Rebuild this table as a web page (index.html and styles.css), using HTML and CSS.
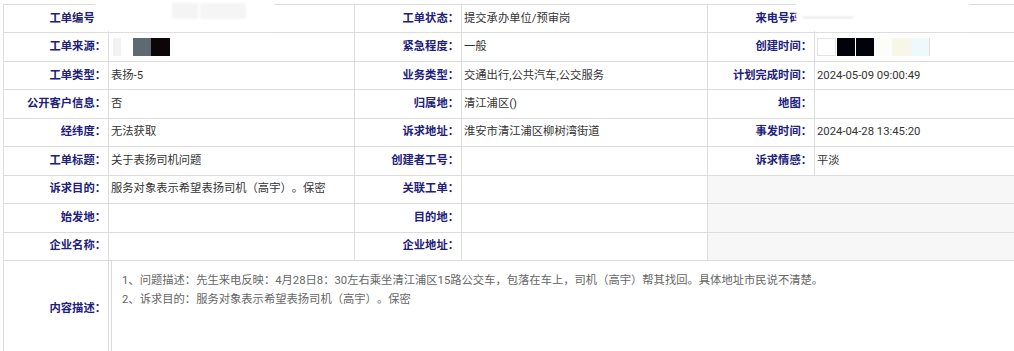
FILE: index.html
```html
<!DOCTYPE html>
<html lang="zh-CN">
<head>
<meta charset="utf-8">
<title>工单详情</title>
<link rel="stylesheet" href="styles.css">
</head>
<body>
<div class="page">
  <table class="info">
    <colgroup>
      <col class="c-lab1"><col class="c-val"><col class="c-lab"><col class="c-val"><col class="c-lab"><col class="c-last">
    </colgroup>
    <tr>
      <th>工单编号：</th><td></td>
      <th>工单状态：</th><td>提交承办单位/预审岗</td>
      <th>来电号码：</th><td></td>
    </tr>
    <tr>
      <th>工单来源：</th><td></td>
      <th>紧急程度：</th><td>一般</td>
      <th>创建时间：</th><td></td>
    </tr>
    <tr>
      <th>工单类型：</th><td>表扬-5</td>
      <th>业务类型：</th><td>交通出行,公共汽车,公交服务</td>
      <th>计划完成时间：</th><td>2024-05-09 09:00:49</td>
    </tr>
    <tr>
      <th>公开客户信息：</th><td>否</td>
      <th>归属地：</th><td>清江浦区()</td>
      <th>地图：</th><td></td>
    </tr>
    <tr>
      <th>经纬度：</th><td>无法获取</td>
      <th>诉求地址：</th><td>淮安市清江浦区柳树湾街道</td>
      <th>事发时间：</th><td>2024-04-28 13:45:20</td>
    </tr>
    <tr>
      <th>工单标题：</th><td>关于表扬司机问题</td>
      <th>创建者工号：</th><td></td>
      <th>诉求情感：</th><td>平淡</td>
    </tr>
    <tr>
      <th>诉求目的：</th><td>服务对象表示希望表扬司机（高宇）。保密</td>
      <th>关联工单：</th><td></td>
      <td class="blank" colspan="2"></td>
    </tr>
    <tr>
      <th>始发地：</th><td></td>
      <th>目的地：</th><td></td>
      <td class="blank" colspan="2"></td>
    </tr>
    <tr>
      <th>企业名称：</th><td></td>
      <th>企业地址：</th><td></td>
      <td class="blank" colspan="2"></td>
    </tr>
    <tr class="content-row">
      <th>内容描述：</th>
      <td colspan="5" class="content-cell">
        <div class="content-box">
          <p>1、问题描述：先生来电反映：4月28日8：30左右乘坐清江浦区15路公交车，包落在车上，司机（高宇）帮其找回。具体地址市民说不清楚。</p>
          <p>2、诉求目的：服务对象表示希望表扬司机（高宇）。保密</p>
        </div>
      </td>
    </tr>
  </table>

  <div class="mask mask-top-left"></div>
  <div class="mask mask-top-right"></div>
  <div class="smudge s1"></div>
  <div class="smudge s2"></div>
  <div class="smudge s3"></div>

  <div class="redact r-src">
    <span class="b b-light"></span><span class="b b-gap"></span><span class="b b-slate"></span><span class="b b-black"></span>
  </div>
  <div class="redact r-time">
    <span class="b b-frame"></span><span class="b b-black2"></span><span class="b b-black2"></span><span class="b b-gap2"></span><span class="b b-cream"></span><span class="b b-cyan"></span>
  </div>
</div>
</body>
</html>
```
FILE: styles.css
```css
html, body {
  margin: 0;
  padding: 0;
  background: #fff;
  overflow: hidden;
}

body {
  font-family: Roboto, "Noto Sans CJK SC", sans-serif;
  font-size: 11.3px;
  color: #333;
  text-spacing-trim: space-all;
}

.page {
  position: relative;
  padding: 4px 0 0 3px;
  width: 1040px;
}

.info {
  border-collapse: collapse;
  table-layout: fixed;
  width: 1030px;
}

.c-lab1 { width: 105px; }
.c-lab { width: 107px; }
.c-val { width: 246px; }
.c-last { width: 219px; }

.info th,
.info td {
  border: 1px solid #dcdcdc;
  height: 28.44px;
  padding: 0;
  box-sizing: border-box;
  white-space: nowrap;
  overflow: hidden;
  vertical-align: middle;
  line-height: 16px;
}

.info th {
  text-align: right;
  font-weight: bold;
  color: #20207a;
  padding-right: 2px;
}

.info td {
  text-align: left;
  padding-left: 2px;
  color: #333;
}

.info td.blank {
  background: #f7f7f7;
}

.content-row th,
.content-row td {
  height: 98px;
}

.info td.content-cell {
  padding: 0 0 0 2px;
  vertical-align: top;
}

.content-box {
  border-left: 1px solid #dcdcdc;
  height: 97px;
  padding: 10px 0 0 10px;
  box-sizing: border-box;
  color: #666;
  line-height: 19px;
}

.content-box p {
  margin: 0;
}

/* redaction overlays */
.mask {
  position: absolute;
  background: #fff;
  box-shadow: 0 0 2px 1px #fff;
}
.mask-top-left {
  left: 96px;
  top: 0;
  width: 177px;
  height: 30px;
}
.mask-top-right {
  left: 797px;
  top: 0;
  width: 171px;
  height: 30px;
}

.smudge {
  position: absolute;
  background: #f4f4f4;
  filter: blur(1px);
}
.s1 { left: 172px; top: 3px; width: 26px; height: 16px; }
.s2 { left: 200px; top: 3px; width: 46px; height: 16px; background: #f5f5f5; }
.s3 { left: 803px; top: 17px; width: 50px; height: 1px; background: #d4d4d4; }

.redact {
  position: absolute;
  display: flex;
  height: 18px;
}
.r-src { left: 113px; top: 38px; }
.r-time { left: 817px; top: 38px; }

.b { display: block; height: 18px; }
.b-light { width: 8px; background: #f2f2f2; }
.b-gap { width: 12px; background: #fff; }
.b-slate { width: 18px; background: #5e6a72; }
.b-black { width: 19px; background: #0c0608; }

.b-frame { width: 19px; background: #fff; border: 1px solid #e3e3e3; box-sizing: border-box; }
.b-black2 { width: 18px; background: #02020a; margin-left: 1px; }
.b-gap2 { width: 18px; background: #fcfcf8; }
.b-cream { width: 19px; background: #f7f7e8; }
.b-cyan { width: 18px; background: #eef9fb; border-right: 1px solid #dedede; }
```
